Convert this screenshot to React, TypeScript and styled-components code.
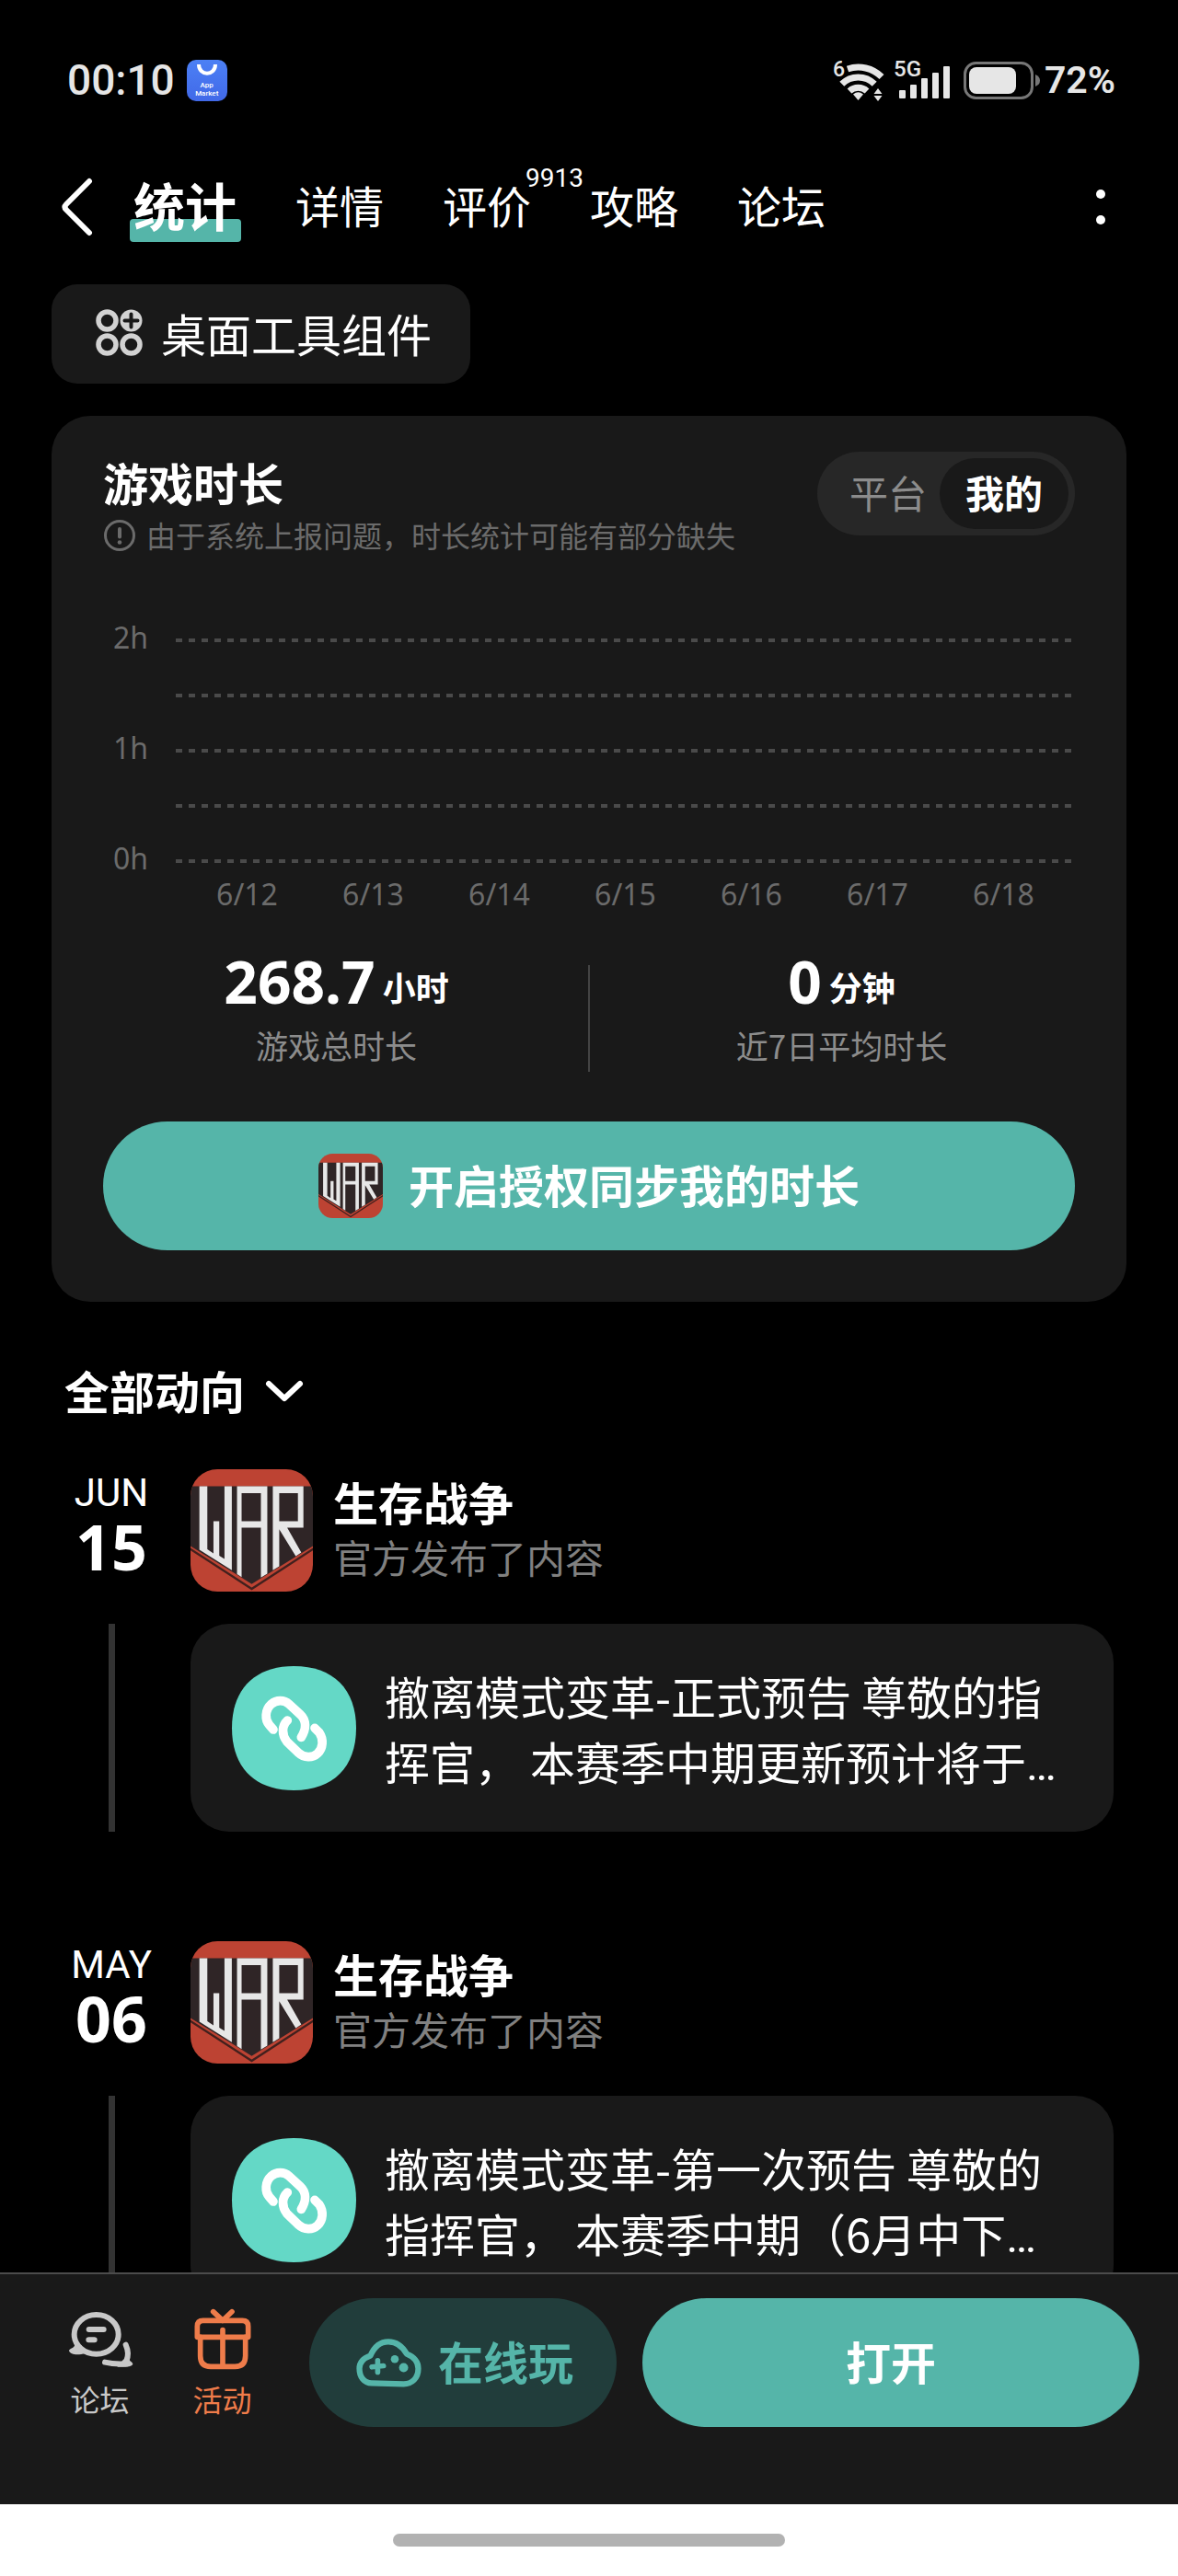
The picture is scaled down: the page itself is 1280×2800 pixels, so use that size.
import React, { useId, useState } from "react";
import styled, { createGlobalStyle } from "styled-components";

const cjk = `"Noto Sans CJK SC", "Noto Sans", sans-serif`;
const roboto = `Roboto, "Noto Sans CJK SC", sans-serif`;
const noto = `"Noto Sans", "Noto Sans CJK SC", sans-serif`;

const accent = "#55b5a9";
const panel = "#191919";

const GlobalStyle = createGlobalStyle`
  *, *::before, *::after { box-sizing: border-box; }
  body { margin: 0; background: #000; color: #fff; font-family: ${cjk}; }
  button { font: inherit; color: inherit; background: none; border: 0; padding: 0; margin: 0; cursor: pointer; }
  a { color: inherit; text-decoration: none; }
  h1, h2, h3, p { margin: 0; }
  svg { display: block; flex: none; overflow: visible; }
`;

const Shell = styled.div`
  display: flex;
  flex-direction: column;
  height: 100vh;
`;

/* ---------- status bar ---------- */

const StatusBar = styled.header`
  display: flex;
  align-items: center;
  justify-content: space-between;
  height: 60px;
  margin: 57px 68px 49px 73px;
  color: #e6e6e6;
  font-family: ${roboto};
  font-weight: 500;
`;

const StatusGroup = styled.div<{ $gap: number }>`
  display: flex;
  align-items: center;
  gap: ${(p) => p.$gap}px;
`;

const Clock = styled.time`
  font-size: 46px;
  line-height: 60px;
`;

const Battery = styled.div`
  display: flex;
  align-items: center;
  gap: 4px;
  margin-left: 4px;
`;

const Percent = styled.span`
  font-size: 41px;
  font-weight: 600;
  line-height: 60px;
`;

const MarketBadge = styled.div`
  display: flex;
  flex-direction: column;
  align-items: center;
  width: 44px;
  height: 45px;
  padding-top: 4px;
  border-radius: 10px;
  background: linear-gradient(#4c80f5, #4169e8);
  color: #fff;
  font-size: 8px;
  line-height: 9px;
  text-align: center;
`;

const MarketName = styled.span`
  width: 28px;
  margin-top: 6px;
`;

/* ---------- tabs ---------- */

const NavBar = styled.nav`
  display: flex;
  align-items: center;
  height: 112px;
  margin: 0 56px 31px;
`;

const IconButton = styled.button`
  display: flex;
  align-items: center;
  justify-content: center;
  width: 56px;
  height: 112px;
  padding-top: 6px;
`;

const TabList = styled.div`
  display: flex;
  flex: 1;
  align-items: center;
  gap: 64px;
  margin-left: 33px;
`;

const Tab = styled.a<{ $active?: boolean }>`
  position: relative;
  z-index: 0;
  font-size: ${(p) => (p.$active ? 56 : 48)}px;
  font-weight: ${(p) => (p.$active ? 700 : 400)};
  line-height: 80px;
  white-space: nowrap;

  &::before {
    content: "";
    display: ${(p) => (p.$active ? "block" : "none")};
    position: absolute;
    z-index: -1;
    left: -4px;
    right: -5px;
    bottom: -1px;
    height: 25px;
    border-radius: 4px;
    background: ${accent};
  }
`;

const TabCount = styled.sup`
  position: absolute;
  left: 90px;
  top: -6px;
  font-family: ${roboto};
  font-size: 28px;
  line-height: 36px;
`;

/* ---------- main ---------- */

const Main = styled.main`
  flex: 1;
  min-height: 0;
  overflow-y: auto;
  scrollbar-width: none;
`;

const WidgetButton = styled.button`
  display: flex;
  align-items: center;
  gap: 20px;
  height: 108px;
  margin: 0 56px 35px;
  padding: 0 42px 4px 48px;
  border-radius: 28px;
  background: ${panel};
  font-size: 49px;
`;

const Card = styled.section`
  margin: 0 56px;
  padding: 39px 56px 56px;
  border-radius: 42px;
  background: ${panel};
`;

const CardHead = styled.div`
  display: flex;
  align-items: flex-start;
  justify-content: space-between;
`;

const CardTitle = styled.h2`
  font-size: 49px;
  line-height: 66px;
`;

const Notice = styled.p`
  display: flex;
  align-items: center;
  gap: 11px;
  color: #6b6b6b;
  font-size: 32px;
  line-height: 48px;
`;

const Toggle = styled.div`
  display: flex;
  padding: 7px;
  border-radius: 46px;
  background: #272727;
`;

const ToggleOption = styled.button<{ $on: boolean }>`
  height: 77px;
  padding: ${(p) => (p.$on ? "0 28px 4px" : "0 14px 4px 28px")};
  border-radius: 39px;
  background: ${(p) => (p.$on ? panel : "transparent")};
  color: ${(p) => (p.$on ? "#fff" : "#8c8c8c")};
  font-size: 42px;
  font-weight: ${(p) => (p.$on ? 700 : 400)};
`;

const Chart = styled.div`
  display: flex;
  flex-direction: column;
  margin-top: 76px;
  color: #6b6b6b;
  font-family: ${noto};
  font-size: 32px;
`;

const ChartRows = styled.div`
  display: flex;
  flex-direction: column;
  gap: 30px;
`;

const ChartRow = styled.div`
  display: grid;
  grid-template-columns: 49px 1fr;
  gap: 30px;
  align-items: center;
  height: 30px;
`;

const HourLabel = styled.span`
  align-self: start;
  line-height: 24px;
  text-align: right;
`;

const GridLine = styled.div`
  height: 4px;
  background: repeating-linear-gradient(90deg, #4a4a4a 0 7px, transparent 7px 14px);
`;

const Dates = styled.div`
  display: flex;
  margin-left: 79px;
  padding: 0 9px;
  line-height: 42px;
`;

const DateLabel = styled.span`
  flex: 1;
  text-align: center;
`;

const Stats = styled.div`
  display: flex;
  align-items: flex-end;
  gap: 20px;
  margin: 42px 0 54px;
`;

const Stat = styled.div`
  display: flex;
  flex: 1;
  flex-direction: column;
  align-items: center;
  gap: 13px;
  padding-bottom: 5px;
`;

const StatValue = styled.div`
  display: flex;
  align-items: flex-end;
  gap: 8px;
  height: 64px;
  font-family: ${noto};
  font-size: 64px;
  font-weight: 700;
  line-height: 64px;
`;

const StatUnit = styled.span`
  font-family: ${cjk};
  font-size: 36px;
  line-height: 54px;
`;

const StatLabel = styled.div`
  color: #8c8c8c;
  font-size: 35px;
  line-height: 48px;
`;

const Divider = styled.div`
  width: 2px;
  height: 116px;
  background: #444;
`;

const Pill = styled.button<{ $tone: "solid" | "tinted" }>`
  display: flex;
  align-items: center;
  justify-content: center;
  height: 140px;
  border-radius: 70px;
  background: ${(p) => (p.$tone === "solid" ? accent : "#213d3b")};
  color: ${(p) => (p.$tone === "solid" ? "#fff" : accent)};
  font-size: 49px;
  font-weight: 700;
  white-space: nowrap;
`;

const PillText = styled.span`
  padding-bottom: 6px;
`;

const SyncPill = styled(Pill)`
  gap: 28px;
  width: 100%;
`;

/* ---------- feed ---------- */

const Feed = styled.section`
  padding: 66px 70px 40px;
`;

const FeedFilter = styled.button`
  display: flex;
  align-items: center;
  gap: 22px;
  margin-bottom: 56px;
  font-size: 49px;
  font-weight: 700;
  line-height: 60px;
`;

const Entry = styled.article`
  display: grid;
  grid-template-columns: 102px 1fr;
  column-gap: 35px;
  row-gap: 35px;

  & + & {
    margin-top: 119px;
  }
`;

const EntryDate = styled.div`
  display: flex;
  flex-direction: column;
  align-items: center;
  padding-top: 2px;
`;

const Month = styled.span`
  font-family: ${roboto};
  font-size: 42px;
  line-height: 48px;
`;

const Day = styled.span`
  font-family: ${noto};
  font-size: 68px;
  font-weight: 700;
  line-height: 68px;
`;

const Author = styled.div`
  display: flex;
  align-items: center;
  gap: 22px;
`;

const AuthorText = styled.div`
  padding-bottom: 3px;
`;

const AuthorName = styled.h3`
  font-size: 49px;
  line-height: 60px;
`;

const AuthorNote = styled.p`
  color: #808080;
  font-size: 42px;
  line-height: 60px;
`;

const TimelineBar = styled.div`
  justify-self: center;
  width: 7px;
  background: #333;
`;

const PostCard = styled.a`
  display: flex;
  align-items: center;
  gap: 31px;
  padding: 42px 44px 42px 45px;
  border-radius: 42px;
  background: ${panel};
`;

const PostText = styled.p`
  flex: 1;
  font-family: ${cjk};
  font-size: 49px;
  line-height: 71px;
`;

const Ellipsis = styled.span`
  font-family: ${roboto};
  line-height: 1;
`;

/* ---------- bottom ---------- */

const ActionBar = styled.footer`
  display: flex;
  gap: 28px;
  padding: 26px 42px 84px;
  border-top: 2px solid #4c4c4c;
  background: ${panel};
`;

const Shortcuts = styled.div`
  display: flex;
`;

const Shortcut = styled.a<{ $color: string }>`
  display: flex;
  flex-direction: column;
  align-items: center;
  gap: 7px;
  width: 133px;
  padding-top: 10px;
  color: ${(p) => p.$color};
  font-size: 32px;
  line-height: 44px;
`;

const OnlinePill = styled(Pill)`
  gap: 18px;
  padding: 0 47px 0 51px;
`;

const OpenPill = styled(Pill)`
  flex: 1;
`;

const HomeArea = styled.div`
  display: flex;
  justify-content: center;
  height: 78px;
  padding-top: 32px;
  background: #fff;
`;

const HomeHandle = styled.div`
  width: 33.3%;
  height: 14px;
  border-radius: 7px;
  background: #b2b2b2;
`;

/* ---------- drawings ---------- */

const Smile = () => (
  <svg width="22" height="13" viewBox="0 0 22 13" fill="none" stroke="#fff" strokeWidth="4">
    <path d="M2 1C2 14 20 14 20 1" />
  </svg>
);

const WifiIcon = () => (
  <svg width="56" height="45" viewBox="0 0 56 45" fill="none" stroke="currentColor" strokeWidth="7">
    <path d="M16 10A36 36 0 0 1 53 18.600" />
    <path d="M9.800 26.300A25 25 0 0 1 45.200 26.300" />
    <path d="M18 34A14 14 0 0 1 37 34" />
    <path d="M27.500 44L22 37.500Q27.500 33 33 37.500Z" fill="currentColor" stroke="none" />
    <path d="M44.500 37L49 31L53.500 37ZM44.500 39L49 45L53.500 39Z" fill="currentColor" stroke="none" />
    <text x="0" y="18" fontSize="23" fill="currentColor" stroke="none">6</text>
  </svg>
);

const SignalIcon = () => (
  <svg width="62" height="45" viewBox="0 0 62 45" fill="currentColor">
    <rect x="6" y="33" width="7" height="9" rx="1" />
    <rect x="18" y="27" width="7" height="15" rx="1" />
    <rect x="30" y="20" width="7" height="22" rx="1" />
    <rect x="42" y="14" width="7" height="28" rx="1" />
    <rect x="54" y="7" width="7" height="35" rx="1" />
    <text x="0" y="18" fontSize="24">5G</text>
  </svg>
);

const BatteryIcon = () => (
  <svg width="84" height="45" viewBox="0 0 84 45">
    <rect x="1.500" y="3.500" width="73" height="38" rx="12" fill="none" stroke="#777" strokeWidth="3" />
    <rect x="6" y="8" width="51" height="29" rx="8" fill="currentColor" />
    <path d="M78 16Q83 18 83 22.500Q83 27 78 29Z" fill="#777" />
  </svg>
);

const BackIcon = () => (
  <svg width="34" height="64" viewBox="0 0 34 64" fill="none" stroke="#fff" strokeWidth="6" strokeLinecap="round" strokeLinejoin="round">
    <path d="M30 4L5 29Q2 32 5 35L30 60" />
  </svg>
);

const MoreIcon = () => (
  <svg width="12" height="40" viewBox="0 0 12 40" fill="#fff">
    <circle cx="6" cy="6" r="5" />
    <circle cx="6" cy="34" r="5" />
  </svg>
);

const WidgetsIcon = () => (
  <svg width="51" height="51" viewBox="0 0 51 51" fill="none" stroke="#d2d2d2" strokeWidth="5.500">
    <circle cx="12.500" cy="12.500" r="9.500" />
    <circle cx="12.500" cy="38.500" r="9.500" />
    <circle cx="38.500" cy="38.500" r="9.500" />
    <circle cx="38.500" cy="12.500" r="12" fill="#d2d2d2" stroke="none" />
    <path d="M38.500 5.500V19.500M31.500 12.500H45.500" stroke={panel} strokeWidth="4" strokeLinecap="round" />
  </svg>
);

const InfoIcon = () => (
  <svg width="36" height="36" viewBox="0 0 36 36" fill="none" stroke="currentColor" strokeWidth="3">
    <circle cx="18" cy="19" r="15.500" />
    <path d="M18 12V20.500" strokeWidth="4" strokeLinecap="round" />
    <circle cx="18" cy="26.500" r="2.300" fill="currentColor" stroke="none" />
  </svg>
);

const GameIcon = ({ size }: { size: number }) => {
  const clip = useId();
  return (
    <svg width={size} height={size} viewBox="0 0 400 400" aria-hidden="true">
      <clipPath id={clip}>
        <rect width="400" height="400" rx="88" />
      </clipPath>
      <g clipPath={`url(#${clip})`}>
        <rect width="400" height="400" fill="#bd4333" />
        <path d="M0 56H400V251L200 375L0 251Z" fill="#2f2526" />
        <path d="M-4 259L200 391L404 259" fill="none" stroke="#42201d" strokeWidth="7" />
        <g fill="#e7e7e7" fillRule="evenodd">
          <path d="M29 56H55V262L75 275V170H94V283L111 293V56H135V330L29 263Z" />
          <path d="M152 56H251V341L230 354V191H167V353L152 343ZM167 78V170H230V78Z" />
          <path d="M269 56H369V191H316L362 272L344 284L290 196V317L269 330ZM290 78V170H351V78Z" />
        </g>
      </g>
    </svg>
  );
};

const LinkBadge = () => (
  <svg width="135" height="135" viewBox="0 0 405 405" aria-hidden="true">
    <path d="M202 0C330 0 405 75 405 202C405 330 330 405 202 405C75 405 0 330 0 202C0 75 75 0 202 0Z" fill="#64d8c6" />
    <g fill="none" stroke="#fff" strokeWidth="29" strokeLinecap="round">
      <path d="M135 207L122 192C107 175 107 143 128 124C145 109 170 109 186 124L223 158C243 177 243 205 226 232" />
      <path d="M181 177C162 195 162 223 179 246L217 283C235 300 263 300 279 285C298 267 299 238 285 217L270 202" />
    </g>
  </svg>
);

const ChevronIcon = () => (
  <svg width="42" height="24" viewBox="0 0 42 24" fill="none" stroke="#fff" strokeWidth="6" strokeLinecap="round" strokeLinejoin="round">
    <path d="M4 5L21 21L38 5" />
  </svg>
);

const ChatIcon = () => (
  <svg width="70" height="70" viewBox="0 0 210 210" fill="none" stroke="currentColor" strokeWidth="18" strokeLinecap="round">
    <ellipse cx="92" cy="88" rx="72" ry="64" />
    <path d="M22 122C18 136 4 132 3 142C8 156 34 156 56 150L44 124Z" fill="currentColor" stroke="none" />
    <path d="M68 72H116M67 106H86" />
    <path d="M188 122C197 142 197 158 190 174M120 179C140 184 160 186 190 184" />
    <path d="M180 170L198 162C198 178 210 176 211 185C208 194 186 195 160 194Z" fill="currentColor" stroke="none" />
  </svg>
);

const GiftIcon = () => (
  <svg width="70" height="70" viewBox="0 0 210 210" fill="none" stroke="currentColor" strokeWidth="17" strokeLinecap="round" strokeLinejoin="round">
    <path d="M22 97V62Q22 43 41 43H169Q188 43 188 62V97Z" />
    <path d="M32 97V158Q32 193 66 193H145Q179 193 179 158V97M105 74V193M74 14L105 43L135 14" />
  </svg>
);

const CloudIcon = () => (
  <svg width="71" height="53" viewBox="0 0 213 160" fill="none" stroke="currentColor" strokeWidth="19" strokeLinejoin="round" strokeLinecap="round">
    <path d="M46 56C58 28 78 10 105 10C132 10 151 25 165 50C190 60 203 75 203 98C203 130 182 149 155 149L50 146C25 146 10 125 10 98C10 76 24 64 46 56Z" />
    <path d="M70 72V110M51 93L89 89" strokeWidth="17" />
    <g fill="currentColor" stroke="none">
      <circle cx="126" cy="67" r="13" />
      <circle cx="155" cy="95" r="15" />
    </g>
  </svg>
);

/* ---------- page ---------- */

const chartRows = ["2h", "", "1h", "", "0h"];
const chartDates = ["6/12", "6/13", "6/14", "6/15", "6/16", "6/17", "6/18"];
const tabs = [
  { name: "统计", active: true },
  { name: "详情" },
  { name: "评价", count: "9913" },
  { name: "攻略" },
  { name: "论坛" },
];
const entries = [
  { month: "JUN", day: "15", text: "撤离模式变革-正式预告 尊敬的指挥官， 本赛季中期更新预计将于" },
  { month: "MAY", day: "06", text: "撤离模式变革-第一次预告 尊敬的指挥官， 本赛季中期（6月中下" },
];

export default function App() {
  const [scope, setScope] = useState("我的");

  return (
    <Shell>
      <GlobalStyle />
      <StatusBar>
        <StatusGroup $gap={13}>
          <Clock>00:10</Clock>
          <MarketBadge>
            <Smile />
            <MarketName>App Market</MarketName>
          </MarketBadge>
        </StatusGroup>
        <StatusGroup $gap={10}>
          <WifiIcon />
          <SignalIcon />
          <Battery>
            <BatteryIcon />
            <Percent>72%</Percent>
          </Battery>
        </StatusGroup>
      </StatusBar>

      <NavBar>
        <IconButton aria-label="返回">
          <BackIcon />
        </IconButton>
        <TabList>
          {tabs.map((tab) => (
            <Tab key={tab.name} href="#" $active={tab.active}>
              {tab.name}
              {tab.count && <TabCount>{tab.count}</TabCount>}
            </Tab>
          ))}
        </TabList>
        <IconButton aria-label="更多">
          <MoreIcon />
        </IconButton>
      </NavBar>

      <Main>
        <WidgetButton>
          <WidgetsIcon />
          桌面工具组件
        </WidgetButton>

        <Card>
          <CardHead>
            <div>
              <CardTitle>游戏时长</CardTitle>
              <Notice>
                <InfoIcon />
                由于系统上报问题，时长统计可能有部分缺失
              </Notice>
            </div>
            <Toggle>
              {["平台", "我的"].map((name) => (
                <ToggleOption key={name} $on={scope === name} aria-pressed={scope === name} onClick={() => setScope(name)}>
                  {name}
                </ToggleOption>
              ))}
            </Toggle>
          </CardHead>

          <Chart>
            <ChartRows>
              {chartRows.map((label, i) => (
                <ChartRow key={i}>
                  <HourLabel>{label}</HourLabel>
                  <GridLine />
                </ChartRow>
              ))}
            </ChartRows>
            <Dates>
              {chartDates.map((date) => (
                <DateLabel key={date}>{date}</DateLabel>
              ))}
            </Dates>
          </Chart>

          <Stats>
            <Stat>
              <StatValue>
                268.7<StatUnit>小时</StatUnit>
              </StatValue>
              <StatLabel>游戏总时长</StatLabel>
            </Stat>
            <Divider />
            <Stat>
              <StatValue>
                0<StatUnit>分钟</StatUnit>
              </StatValue>
              <StatLabel>近7日平均时长</StatLabel>
            </Stat>
          </Stats>

          <SyncPill $tone="solid">
            <GameIcon size={70} />
            <PillText>开启授权同步我的时长</PillText>
          </SyncPill>
        </Card>

        <Feed>
          <FeedFilter>
            全部动向
            <ChevronIcon />
          </FeedFilter>
          {entries.map((entry) => (
            <Entry key={entry.month}>
              <EntryDate>
                <Month>{entry.month}</Month>
                <Day>{entry.day}</Day>
              </EntryDate>
              <Author>
                <GameIcon size={133} />
                <AuthorText>
                  <AuthorName>生存战争</AuthorName>
                  <AuthorNote>官方发布了内容</AuthorNote>
                </AuthorText>
              </Author>
              <TimelineBar />
              <PostCard href="#">
                <LinkBadge />
                <PostText>
                  {entry.text}
                  <Ellipsis>…</Ellipsis>
                </PostText>
              </PostCard>
            </Entry>
          ))}
        </Feed>
      </Main>

      <ActionBar>
        <Shortcuts>
          <Shortcut href="#" $color="#c8c8c8">
            <ChatIcon />
            论坛
          </Shortcut>
          <Shortcut href="#" $color="#ef7c4a">
            <GiftIcon />
            活动
          </Shortcut>
        </Shortcuts>
        <OnlinePill $tone="tinted">
          <CloudIcon />
          <PillText>在线玩</PillText>
        </OnlinePill>
        <OpenPill $tone="solid">
          <PillText>打开</PillText>
        </OpenPill>
      </ActionBar>
      <HomeArea>
        <HomeHandle />
      </HomeArea>
    </Shell>
  );
}
